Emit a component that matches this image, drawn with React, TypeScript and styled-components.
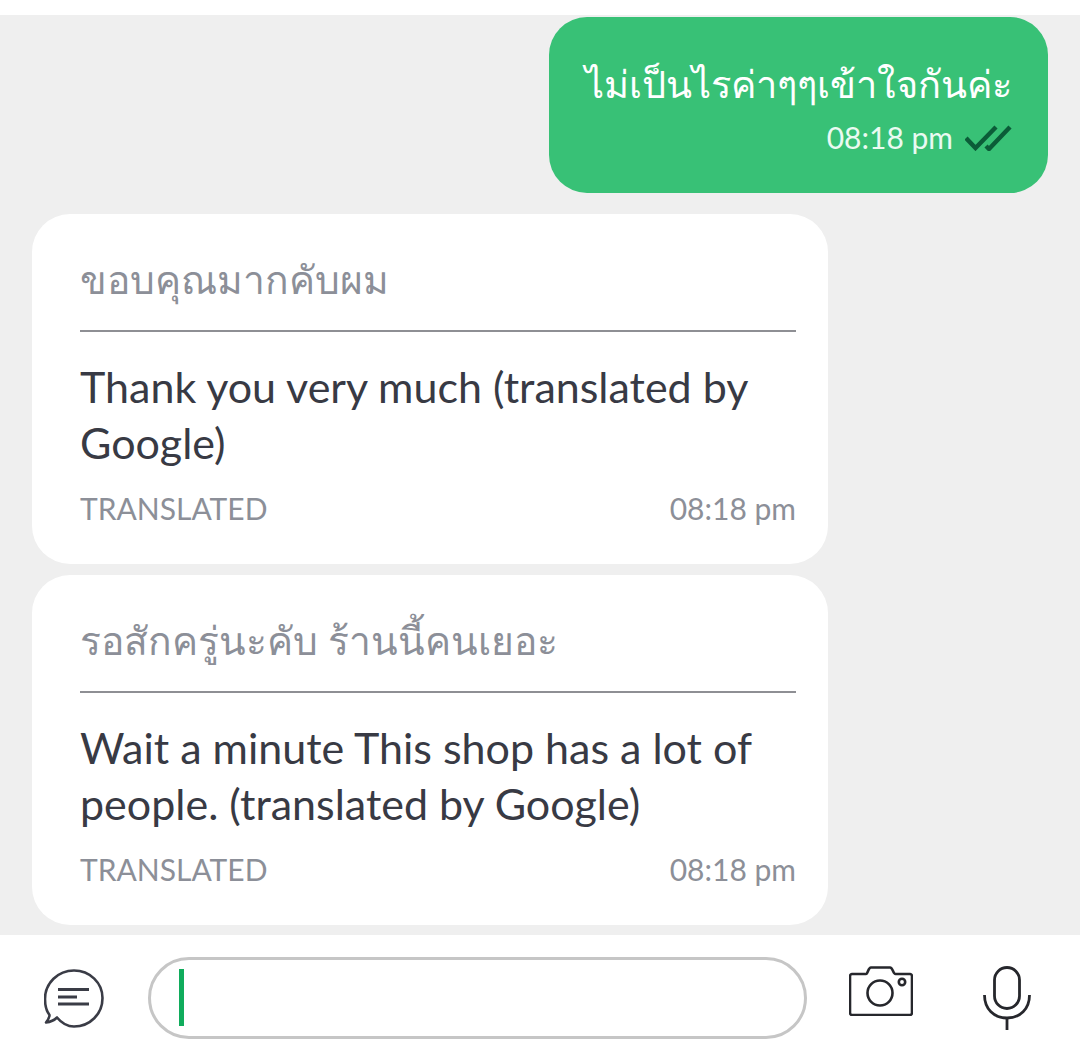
import React from "react";
import styled, { createGlobalStyle } from "styled-components";

const Global = createGlobalStyle`
  html, body { margin: 0; padding: 0; background: #fff; }
  body { font-family: Lato, "Noto Sans", sans-serif; }
`;

const Page = styled.div`
  width: 1080px;
  height: 1044px;
  display: flex;
  flex-direction: column;
  background: #fff;
  overflow: hidden;
  padding-top: 15px;
  box-sizing: border-box;
`;

const Thread = styled.div`
  height: 920px;
  flex: none;
  box-sizing: border-box;
  background: #efefef;
  padding: 2px 32px 0;
  display: flex;
  flex-direction: column;
`;

const SentBubble = styled.div`
  align-self: flex-end;
  flex: none;
  width: 499px;
  height: 176px;
  box-sizing: border-box;
  background: #38c176;
  border-radius: 38px;
  padding: 36px 36px 0 36px;
  display: flex;
  flex-direction: column;
  align-items: flex-end;
  color: #fff;
  margin-bottom: 21px;
`;

const SentText = styled.div`
  font-size: 38px;
  line-height: 60px;
  white-space: nowrap;
`;

const SentMeta = styled.div`
  display: flex;
  align-items: center;
  gap: 12px;
  font-size: 30px;
  line-height: 40px;
  margin-top: 4px;
  color: #eafaf1;
`;

const ReceivedBubble = styled.div`
  width: 796px;
  height: 350px;
  flex: none;
  box-sizing: border-box;
  background: #fff;
  border-radius: 38px;
  padding: 36px 32px 0 48px;
  margin-bottom: 11px;
`;

const Original = styled.div`
  font-size: 39px;
  line-height: 58px;
  height: 80px;
  color: #8c8f98;
  border-bottom: 2px solid #8e8f94;
  white-space: nowrap;
`;

const Translation = styled.div`
  font-size: 43px;
  line-height: 56px;
  color: #383a44;
  margin-top: 27px;
  height: 112px;
`;

const Footer = styled.div`
  display: flex;
  justify-content: space-between;
  align-items: center;
  font-size: 30px;
  line-height: 40px;
  color: #8c8f98;
  margin-top: 17px;
`;

const Composer = styled.div`
  flex: 1;
  display: flex;
  align-items: center;
  padding: 16px 48px 0 44px;
`;

const InputPill = styled.div`
  width: 659px;
  height: 82px;
  box-sizing: border-box;
  border: 3px solid #c6c6c6;
  border-radius: 41px;
  margin-left: 44px;
  margin-right: 42px;
  padding-left: 28px;
  display: flex;
  align-items: center;
`;

const Caret = styled.div`
  width: 5px;
  height: 57px;
  background: #10ac5c;
`;

const CameraSlot = styled.div`
  display: flex;
  margin-bottom: 14px;
`;

const MicSlot = styled.div`
  display: flex;
  margin-left: 70px;
`;

const ChatIcon = () => (
  <svg width="60" height="60" viewBox="0 0 60 60" fill="none" stroke="#3a3c46" strokeWidth="2.6" strokeLinecap="round" strokeLinejoin="round">
    <path d="M13 49.5 C10 52.5 6 54 2 54.5 C4 52 5.5 49.5 5.5 47 C2 42.5 1 37 1 31 C1 15 14 2.5 30 2.5 C46 2.5 58.5 15 58.5 30 C58.5 46 46 58.5 30 58.5 C23 58.5 17.5 55 13 49.5 Z" />
    <path d="M14 21.5 H45 M14 29 H33 M14 36 H45" strokeWidth="2.8" strokeLinecap="butt" />
  </svg>
);

const CameraIcon = () => (
  <svg width="64" height="50" viewBox="0 0 64 50" fill="none" stroke="#26272c" strokeWidth="2.6" strokeLinejoin="round">
    <path d="M3 8 H17 C19 8 19 1.5 22 1.5 H41 C44 1.5 44 8 46.5 8 H61 C62 8 63 9 63 10 V47 C63 48 62 49 61 49 H3 C2 49 1 48 1 47 V10 C1 9 2 8 3 8 Z" />
    <circle cx="31" cy="27" r="12.5" />
    <circle cx="53" cy="16" r="3.2" />
  </svg>
);

const MicIcon = () => (
  <svg width="48" height="64" viewBox="0 0 48 64" fill="none" stroke="#26272c" strokeWidth="2.8" strokeLinecap="butt">
    <rect x="11.5" y="1.5" width="25" height="41" rx="12.5" />
    <path d="M1.5 29 C1.5 43 11 52 24 52 C37 52 46.5 43 46.5 29" />
    <path d="M24 52 V64" />
  </svg>
);

const DoubleCheck = () => (
  <svg width="47" height="28" viewBox="0 0 47 28" fill="none" stroke="#0b5c38" strokeWidth="4.4">
    <path d="M1 15 L10.5 25 L31 4" />
    <path d="M21 23 L24 26 L45 4" />
  </svg>
);

const messages = [
  { original: "ขอบคุณมากคับผม", translation: "Thank you very much (translated by Google)" },
  { original: "รอสักครู่นะคับ ร้านนี้คนเยอะ", translation: "Wait a minute This shop has a lot of people. (translated by Google)" },
];

export default function App() {
  return (
    <Page>
      <Global />
      <Thread>
        <SentBubble>
          <SentText>ไม่เป็นไรค่าๆๆเข้าใจกันค่ะ</SentText>
          <SentMeta>
            <span>08:18 pm</span>
            <DoubleCheck />
          </SentMeta>
        </SentBubble>
        {messages.map((m) => (
          <ReceivedBubble key={m.original}>
            <Original>{m.original}</Original>
            <Translation>{m.translation}</Translation>
            <Footer>
              <span>TRANSLATED</span>
              <span>08:18 pm</span>
            </Footer>
          </ReceivedBubble>
        ))}
      </Thread>
      <Composer>
        <ChatIcon />
        <InputPill>
          <Caret />
        </InputPill>
        <CameraSlot>
          <CameraIcon />
        </CameraSlot>
        <MicSlot>
          <MicIcon />
        </MicSlot>
      </Composer>
    </Page>
  );
}
